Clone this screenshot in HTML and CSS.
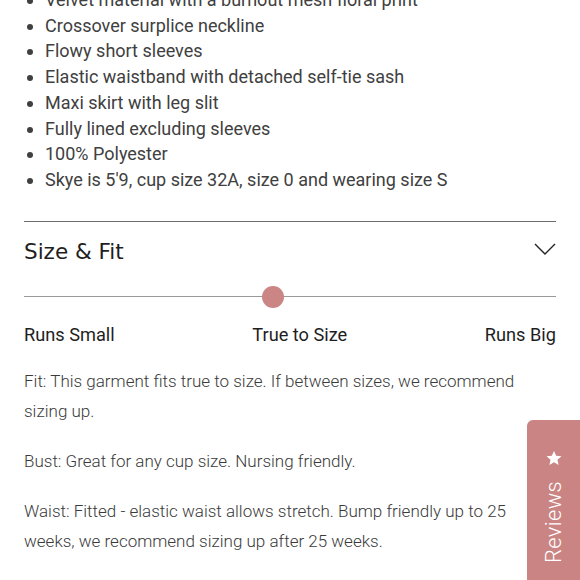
FILE: index.html
```html
<!DOCTYPE html>
<html lang="en">
<head>
<meta charset="utf-8">
<title>Size &amp; Fit</title>
<link rel="stylesheet" href="styles.css">
</head>
<body>
<main class="page">
  <ul class="features">
    <li>Velvet material with a burnout mesh floral print</li>
    <li>Crossover surplice neckline</li>
    <li>Flowy short sleeves</li>
    <li>Elastic waistband with detached self-tie sash</li>
    <li>Maxi skirt with leg slit</li>
    <li>Fully lined excluding sleeves</li>
    <li>100% Polyester</li>
    <li>Skye is 5'9, cup size 32A, size 0 and wearing size S</li>
  </ul>

  <section class="accordion">
    <div class="acc-head">
      <h2 class="acc-title">Size &amp; Fit</h2>
      <svg class="chevron" width="22" height="12" viewBox="0 0 22 12" aria-hidden="true">
        <polyline points="1,1 11,11 21,1" fill="none" stroke="#222" stroke-width="1.4"/>
      </svg>
    </div>

    <div class="slider">
      <div class="track"></div>
      <div class="thumb"></div>
    </div>
    <div class="scale-labels">
      <span>Runs Small</span>
      <span>True to Size</span>
      <span>Runs Big</span>
    </div>

    <p class="note">Fit: This garment fits true to size. If between sizes, we recommend sizing up.</p>
    <p class="note">Bust: Great for any cup size. Nursing friendly.</p>
    <p class="note">Waist: Fitted - elastic waist allows stretch. Bump friendly up to 25 weeks, we recommend sizing up after 25 weeks.</p>
  </section>
</main>

<button class="reviews-tab" type="button">
  <span class="reviews-inner">
    <span class="reviews-label">Reviews</span>
    <svg class="star" width="18" height="18" viewBox="0 0 24 24" aria-hidden="true">
      <path d="M12 2.5l2.9 6.6 7.1.6-5.4 4.7 1.6 7-6.2-3.7-6.2 3.7 1.6-7L2 9.7l7.1-.6z" fill="#fff"/>
    </svg>
  </span>
</button>
</body>
</html>
```

FILE: styles.css
```css
* { box-sizing: border-box; }

html, body {
  margin: 0;
  padding: 0;
  background: #fff;
  overflow: hidden;
}

body {
  font-family: Roboto, "Liberation Sans", sans-serif;
  color: #333;
  width: 580px;
  height: 580px;
}

.page {
  padding: 0 24px;
}

.features {
  margin: -13px 0 0 0;
  padding: 0 0 0 21px;
  font-size: 18px;
  line-height: 25.7px;
  color: #404040;
}

.accordion {
  margin-top: 28px;
  border-top: 1.5px solid #6e6e6e;
}

.acc-head {
  display: flex;
  align-items: center;
  justify-content: space-between;
  padding-top: 15px;
}

.acc-title {
  margin: 0;
  font-family: "DejaVu Sans", Roboto, sans-serif;
  font-weight: 400;
  font-size: 21.5px;
  line-height: 30px;
  color: #1e1e1e;
}

.chevron {
  display: block;
  margin-top: -6px;
}

.slider {
  position: relative;
  height: 22px;
  margin-top: 19px;
  display: flex;
  align-items: center;
}

.track {
  flex: 1;
  height: 1px;
  background: #9a9a9a;
}

.thumb {
  position: absolute;
  left: 238px;
  top: 0;
  width: 22px;
  height: 22px;
  border-radius: 50%;
  background: #cb8584;
}

.scale-labels {
  display: flex;
  justify-content: space-between;
  margin-top: 15px;
  font-size: 18.2px;
  line-height: 24px;
  color: #1e1e1e;
}

.note {
  margin: 19px 0 0 0;
  font-size: 17px;
  line-height: 30px;
  font-weight: 300;
  color: #3a3a3a;
}

.note + .note {
  margin-top: 20px;
}

.reviews-tab {
  position: fixed;
  left: 527px;
  top: 420px;
  width: 60px;
  height: 170px;
  padding: 0;
  border: none;
  border-radius: 6px 0 0 0;
  background: #c98483;
  color: #fff;
  font-family: Roboto, "Liberation Sans", sans-serif;
  cursor: pointer;
}

.reviews-inner {
  position: absolute;
  left: 0;
  top: 0;
  width: 53px;
  display: flex;
  flex-direction: column-reverse;
  align-items: center;
  padding-top: 29px;
  gap: 14px;
}

.reviews-label {
  writing-mode: vertical-rl;
  transform: rotate(180deg);
  font-size: 22px;
  font-weight: 300;
  line-height: 22px;
  letter-spacing: 0.3px;
}

.star {
  display: block;
}
```
